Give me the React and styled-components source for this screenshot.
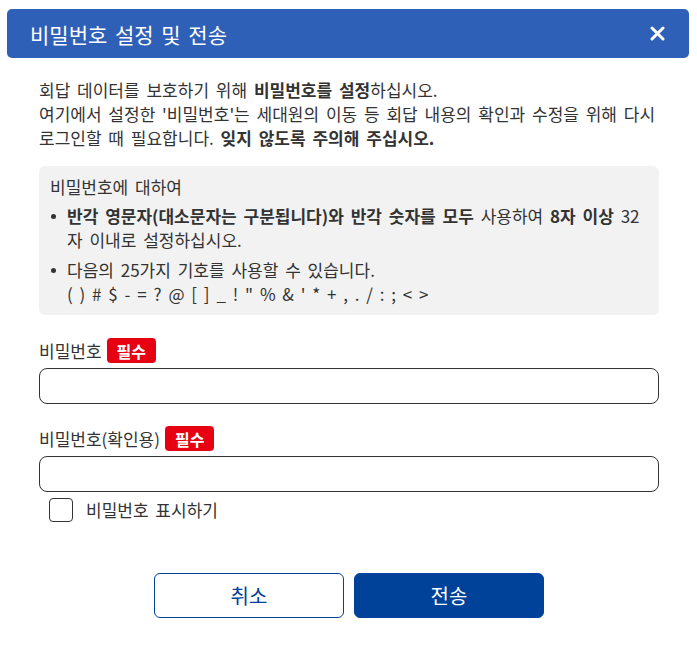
import React from 'react'
import styled, { createGlobalStyle } from 'styled-components'

const GlobalStyle = createGlobalStyle`
  html, body {
    margin: 0;
    padding: 0;
    background: #fff;
  }
  body {
    font-family: "Noto Sans CJK KR", "Noto Sans", sans-serif;
    color: #333;
  }
  * {
    box-sizing: border-box;
  }
`

const Dialog = styled.div`
  width: 697px;
  min-height: 655px;
  padding: 9px 8px 0 7px;
  background: #fff;
`

const Header = styled.div`
  height: 49px;
  display: flex;
  align-items: center;
  justify-content: space-between;
  padding: 0 24px 0 23px;
  background: #2f60b7;
  border-radius: 5px;
  color: #fff;

  h1 {
    margin: 0;
    font-size: 21px;
    font-weight: 400;
    word-spacing: 3px;
  }
`

const CloseButton = styled.button`
  display: flex;
  padding: 0;
  border: 0;
  background: none;
  cursor: pointer;
`

const Body = styled.div`
  padding: 20px 30px 0 32px;
  font-size: 17px;
  line-height: 24px;
  word-spacing: 3px;
`

const Intro = styled.p`
  margin: 0;

  b {
    font-weight: 700;
  }
`

const InfoBox = styled.div`
  margin-top: 16px;
  padding: 9px 10px 9px 11px;
  background: #f2f2f2;
  border-radius: 6px;

  p {
    margin: 0;
  }

  ul {
    margin: 5px 0 0;
    padding: 0;
    list-style: none;
  }
`

const Item = styled.li`
  display: flex;
  margin-top: ${p => (p.first ? '0' : '6px')};

  &::before {
    content: '';
    flex: 0 0 5px;
    width: 5px;
    height: 5px;
    margin: 10px 11px 0 1px;
    border-radius: 50%;
    background: #333;
  }

  b {
    font-weight: 700;
  }
`

const Field = styled.div`
  margin-top: ${p => p.gap}px;
`

const Label = styled.label`
  display: flex;
  align-items: center;
  height: 25px;
  gap: 5px;
`

const Badge = styled.span`
  display: inline-flex;
  align-items: center;
  height: 25px;
  padding: 0 10px;
  border-radius: 4px;
  background: #e60012;
  color: #fff;
  font-size: 16px;
  font-weight: 700;
  word-spacing: 0;
`

const Input = styled.input`
  display: block;
  width: 100%;
  height: 36px;
  margin-top: 5px;
  padding: 0 10px;
  border: 1px solid #333;
  border-radius: 8px;
  font: inherit;
  outline: none;
`

const CheckRow = styled.label`
  display: flex;
  align-items: center;
  gap: 13px;
  margin: 6px 0 0 10px;
  height: 24px;
`

const Box = styled.span`
  width: 24px;
  height: 24px;
  border: 1px solid #333;
  border-radius: 4px;
  background: #fff;
`

const Actions = styled.div`
  display: flex;
  justify-content: center;
  gap: 10px;
  margin-top: 51px;
`

const Button = styled.button`
  width: 190px;
  height: 45px;
  border-radius: 6px;
  border: 1px solid #00419a;
  background: ${p => (p.primary ? '#00419a' : '#fff')};
  color: ${p => (p.primary ? '#fff' : '#00419a')};
  font-family: inherit;
  font-size: 20px;
  cursor: pointer;
`

function App () {
  return (
    <>
      <GlobalStyle />
      <Dialog>
        <Header>
          <h1>비밀번호 설정 및 전송</h1>
          <CloseButton aria-label='닫기'>
            <svg width='15' height='15' viewBox='0 0 15 15'>
              <path d='M2 2 L13 13 M13 2 L2 13' stroke='#fff' strokeWidth='3' strokeLinecap='round' />
            </svg>
          </CloseButton>
        </Header>
        <Body>
          <Intro>
            회답 데이터를 보호하기 위해 <b>비밀번호를 설정</b>하십시오.
            <br />
            여기에서 설정한 '비밀번호'는 세대원의 이동 등 회답 내용의 확인과 수정을 위해 다시 로그인할 때 필요합니다. <b>잊지 않도록 주의해 주십시오.</b>
          </Intro>
          <InfoBox>
            <p>비밀번호에 대하여</p>
            <ul>
              <Item first>
                <span>
                  <b>반각 영문자(대소문자는 구분됩니다)와 반각 숫자를 모두</b> 사용하여 <b>8자 이상</b> 32자 이내로 설정하십시오.
                </span>
              </Item>
              <Item>
                <span>
                  다음의 25가지 기호를 사용할 수 있습니다.
                  <br />
                  ( ) # $ - = ? @ [ ] _ ! " % &amp; ' * + , . / : ; &lt; &gt;
                </span>
              </Item>
            </ul>
          </InfoBox>
          <Field gap={23}>
            <Label>비밀번호<Badge>필수</Badge></Label>
            <Input type='password' />
          </Field>
          <Field gap={22}>
            <Label>비밀번호(확인용)<Badge>필수</Badge></Label>
            <Input type='password' />
          </Field>
          <CheckRow>
            <Box />
            <span>비밀번호 표시하기</span>
          </CheckRow>
          <Actions>
            <Button>취소</Button>
            <Button primary>전송</Button>
          </Actions>
        </Body>
      </Dialog>
    </>
  )
}

export default App
